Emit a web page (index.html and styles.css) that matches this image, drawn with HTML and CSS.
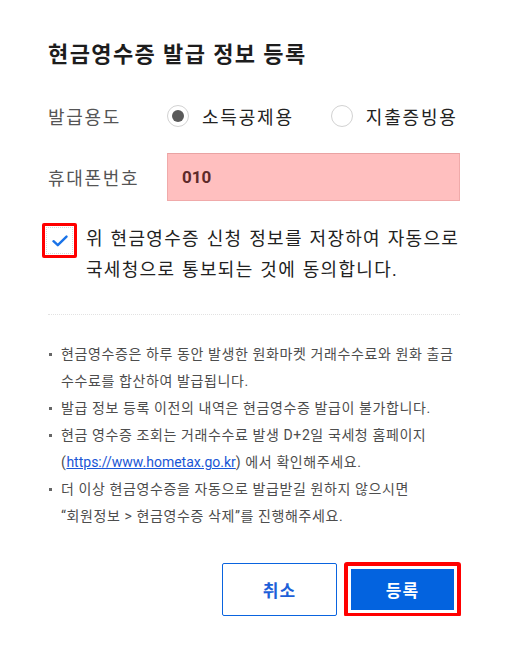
FILE: index.html
```html
<!DOCTYPE html>
<html lang="ko">
<head>
    <meta charset="UTF-8">
    <meta name="viewport" content="width=device-width, initial-scale=1.0">
    <title>현금영수증 발급 정보 등록</title>
    <link rel="stylesheet" href="styles.css">
</head>
<body>
    <div class="modal">
        <h1 class="title">현금영수증 발급 정보 등록</h1>

        <div class="form-row">
            <span class="label">발급용도</span>
            <div class="radios">
                <label class="radio">
                    <span class="radio-mark checked"></span>
                    <span>소득공제용</span>
                </label>
                <label class="radio">
                    <span class="radio-mark"></span>
                    <span>지출증빙용</span>
                </label>
            </div>
        </div>

        <div class="form-row phone-row">
            <span class="label">휴대폰번호</span>
            <div class="phone-input">010</div>
        </div>

        <div class="agree">
            <span class="check-box">
                <span class="check-inner">
                    <svg width="16" height="12" viewBox="0 0 16 12">
                        <path d="M1.5 6.2 L5.8 10.2 L14.5 1.6" fill="none" stroke="#1a73e8" stroke-width="2.4" stroke-linecap="round" stroke-linejoin="round"/>
                    </svg>
                </span>
            </span>
            <p class="agree-text">위 현금영수증 신청 정보를 저장하여 자동으로 국세청으로 통보되는 것에 동의합니다.</p>
        </div>

        <hr class="divider">

        <ul class="notice">
            <li><span>현금영수증은 하루 동안 발생한 원화마켓 거래수수료와 원화 출금 수수료를 합산하여 발급됩니다.</span></li>
            <li><span>발급 정보 등록 이전의 내역은 현금영수증 발급이 불가합니다.</span></li>
            <li><span>현금 영수증 조회는 거래수수료 발생 D+2일 국세청 홈페이지 (<a href="#">https://www.hometax.go.kr</a>) 에서 확인해주세요.</span></li>
            <li><span>더 이상 현금영수증을 자동으로 발급받길 원하지 않으시면 “회원정보 &gt; 현금영수증 삭제”를 진행해주세요.</span></li>
        </ul>

        <div class="actions">
            <button type="button" class="btn btn-outline">취소</button>
            <button type="button" class="btn btn-primary">등록</button>
        </div>
    </div>
</body>
</html>
```

FILE: styles.css
```css
body {
    margin: 0;
    background: #fff;
    font-family: Roboto, "Noto Sans CJK KR", sans-serif;
    color: #222;
}
.modal {
    width: 510px;
    box-sizing: border-box;
    padding: 40px 50px 0 48px;
}
.title {
    margin: 0;
    font-size: 22px;
    line-height: 30px;
    font-weight: 700;
    letter-spacing: 1.4px;
    color: #1d1d1d;
}
.form-row {
    display: flex;
    align-items: center;
    margin-top: 26px;
    height: 40px;
}
.phone-row {
    margin-top: 17px;
    height: 48px;
}
.label {
    width: 119px;
    flex-shrink: 0;
    font-size: 18px;
    letter-spacing: 1.7px;
    color: #555;
}
.radios {
    display: flex;
    align-items: center;
    gap: 37px;
}
.radio {
    display: flex;
    align-items: center;
    gap: 13px;
    font-size: 18px;
    letter-spacing: 1.8px;
    color: #222;
}
.radio-mark {
    width: 22px;
    height: 22px;
    box-sizing: border-box;
    border: 1.5px solid #d2d2d2;
    border-radius: 50%;
    display: flex;
    align-items: center;
    justify-content: center;
}
.radio-mark.checked::after {
    content: "";
    width: 12px;
    height: 12px;
    border-radius: 50%;
    background: #5a5a5a;
}
.phone-input {
    flex: 1;
    height: 48px;
    box-sizing: border-box;
    background: #ffbfbf;
    border: 1px solid #f0aaaa;
    border-top-color: #e9a3a3;
    padding-left: 14px;
    display: flex;
    align-items: center;
    font-size: 17px;
    font-weight: 700;
    color: #5e2a2a;
}
.agree {
    display: flex;
    align-items: flex-start;
    gap: 9px;
    margin-top: 22px;
    margin-left: -6px;
}
.check-box {
    width: 35px;
    height: 35px;
    box-sizing: border-box;
    border: 3px solid #f00;
    border-radius: 2px;
    padding: 1px;
    flex-shrink: 0;
}
.check-inner {
    display: flex;
    align-items: center;
    justify-content: center;
    height: 100%;
    box-sizing: border-box;
    border: 1px dotted #d8d8d8;
}
.agree-text {
    margin: 0;
    font-size: 18px;
    line-height: 31px;
    letter-spacing: 1.3px;
    word-spacing: 1px;
    word-break: keep-all;
    color: #222;
}
.divider {
    margin: 29px 0 0;
    border: 0;
    border-top: 1px dotted #e2e2e2;
}
.notice {
    list-style: none;
    margin: 26px 0 0;
    padding: 0;
    font-size: 14px;
    line-height: 27px;
    letter-spacing: 0.6px;
    word-break: keep-all;
    color: #4d4d4d;
}
.notice li {
    display: flex;
    gap: 9px;
}
.notice li::before {
    content: "";
    width: 3px;
    height: 3px;
    background: #666;
    margin: 12px 0 0 1px;
    flex-shrink: 0;
}
.notice a {
    color: #1a56d6;
    letter-spacing: 0;
}
.actions {
    display: flex;
    justify-content: flex-end;
    gap: 8px;
    margin-top: 33px;
}
.btn {
    width: 115px;
    height: 53px;
    font-family: inherit;
    font-size: 17px;
    font-weight: 700;
    letter-spacing: 1px;
    border-radius: 2px;
    cursor: pointer;
}
.btn-outline {
    background: #fff;
    border: 1px solid #0a64df;
    color: #1d5fd8;
}
.btn-primary {
    background: #0363df;
    border: none;
    color: #fff;
    box-shadow: inset 0 0 0 6px #fff;
    outline: 4px solid #f00;
    outline-offset: -3px;
}
```
